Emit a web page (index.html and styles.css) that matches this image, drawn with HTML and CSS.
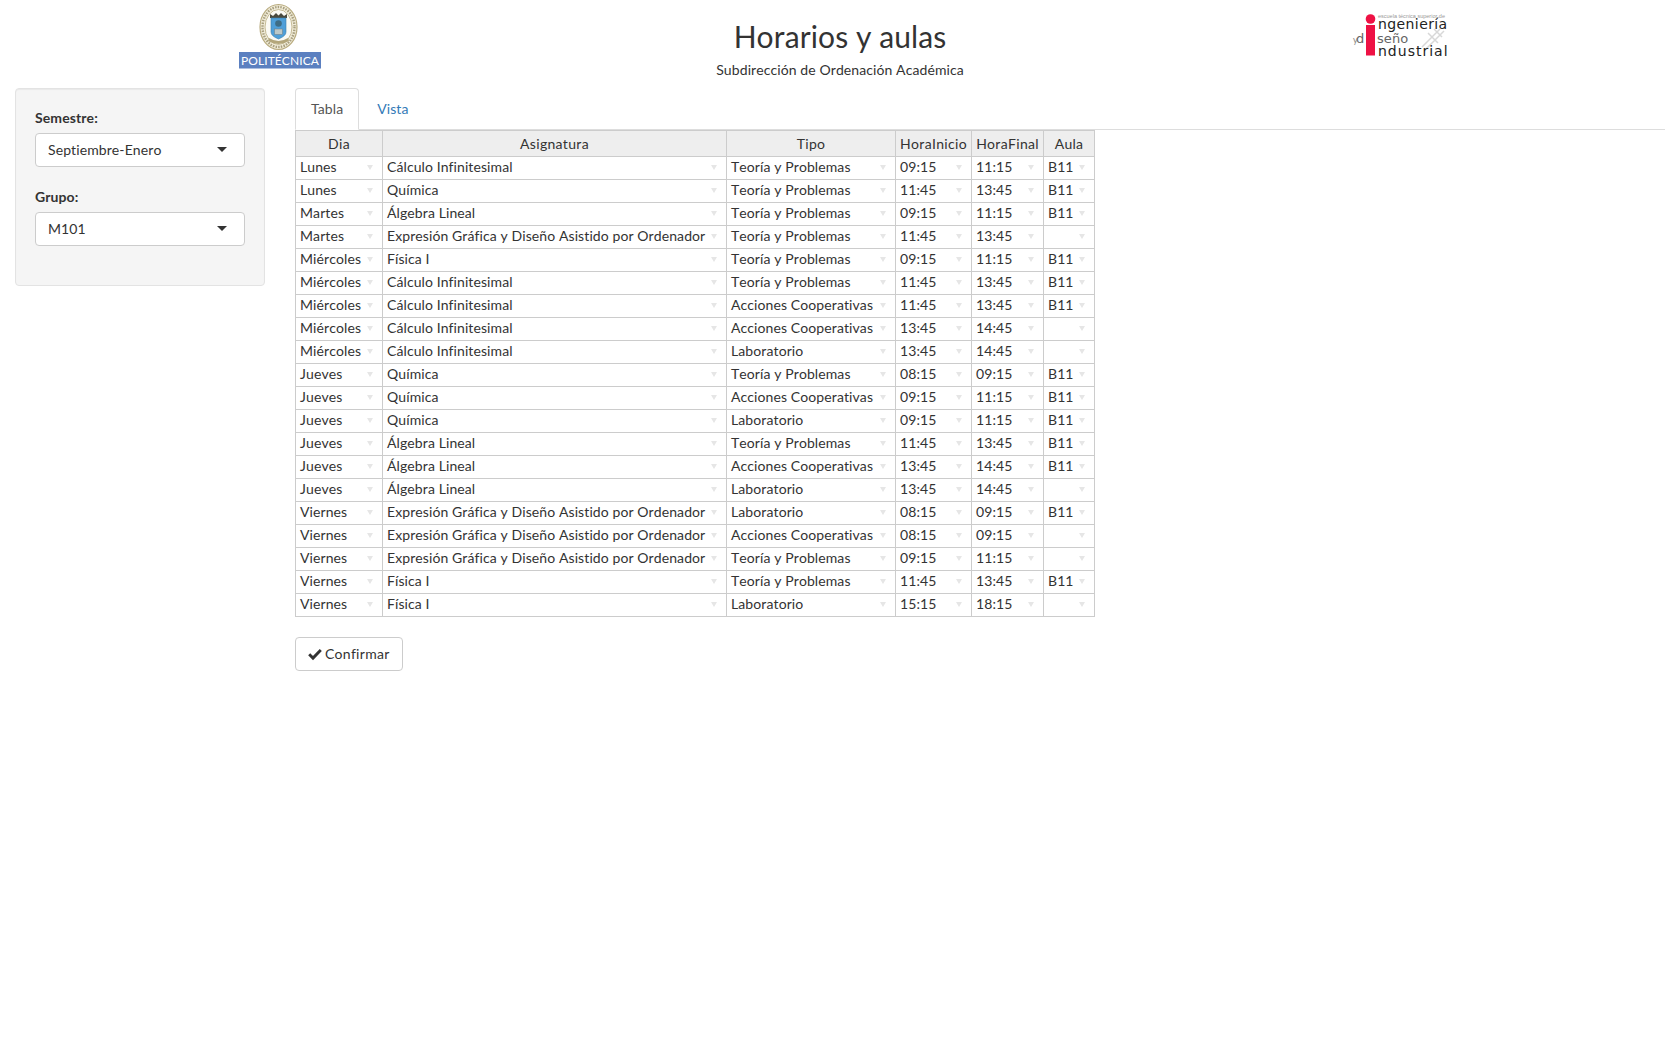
FILE: index.html
```html
<!DOCTYPE html>
<html>

<head>
	<title>Horarios y aulas</title>
	<meta charset="UTF-8">
	<link rel="stylesheet" href="styles.css">
	<meta name="viewport" content="width=device-width, initial-scale=1">
</head>

<body>
	<div class="header">
		<div class="header-col">
			<svg class="logo-upm" width="84" height="70" viewBox="0 0 84 70">
				<ellipse cx="39.500" cy="27" rx="18.500" ry="22.500" fill="#f1ecd9" stroke="#b9ac80" stroke-width="1.200"/>
				<ellipse cx="39.500" cy="27" rx="16" ry="20" fill="none" stroke="#8f8560" stroke-width="2.400" stroke-dasharray="1.500 1.200" opacity=".75"/>
				<ellipse cx="39.500" cy="27" rx="13.500" ry="17.500" fill="#fbfaf4" stroke="#b9ac80" stroke-width=".8"/>
				<path d="M31 14l3 2 3-3 2.500 2.500 2.500-2.500 3 3 3-2v4h-17z" fill="#4a4a3e"/>
				<path d="M32 18h15v14q0 4-7.500 7q-7.500-3-7.500-7z" fill="#4f9fd8" stroke="#3a7fae" stroke-width=".6"/>
				<circle cx="39.500" cy="23.500" r="3.300" fill="#3f6d85"/>
				<rect x="35.500" y="29" width="8" height="5.500" fill="#bcc8c8" stroke="#6d7d80" stroke-width=".5"/>
				<path d="M30 38q9.500 6 19 0l1 3q-10.500 6-21 0z" fill="#b3a67a"/>
				<rect x="0" y="52" width="82" height="16.500" fill="#5b80c0"/>
				<text x="41" y="64.500" class="logo-upm-text" text-anchor="middle">POLITÉCNICA</text>
			</svg>
		</div>
		<div class="header-col">
			<h2 class="title">Horarios y aulas</h2>
			<p class="subtitle">Subdirección de Ordenación Académica</p>
		</div>
		<div class="header-col">
			<svg class="logo-etsidi" width="100" height="50" viewBox="0 0 100 50">
				<path d="M72 37l18-18M76 39l18-18M78 23l10 10M84 19l8 8" stroke="#d8d8d8" stroke-width="1.500" fill="none"/>
				<circle cx="20.500" cy="9" r="4.800" fill="#ee1144"/>
				<rect x="16" y="15" width="9" height="30.500" fill="#ee1144"/>
				<text x="28" y="8" class="logo-small">escuela técnica superior de</text>
				<text x="28" y="19" class="logo-big">ngeniería</text>
				<text x="3" y="33" class="logo-gray-y">y</text>
				<text x="6" y="33" class="logo-gray">d</text>
				<text x="27" y="33" class="logo-gray">seño</text>
				<text x="28" y="46" class="logo-big logo-wide">ndustrial</text>
			</svg>
		</div>
	</div>

	<div class="content">
		<div class="sidebar">
			<div class="form-group">
				<label>Semestre:</label>
				<div class="select-box">Septiembre-Enero</div>
			</div>
			<div class="form-group">
				<label>Grupo:</label>
				<div class="select-box">M101</div>
			</div>
		</div>

		<div class="main">
			<ul class="nav-tabs">
				<li class="active">Tabla</li>
				<li>Vista</li>
			</ul>

			<table class="schedule">
				<colgroup>
					<col class="c-dia">
					<col class="c-asig">
					<col class="c-tipo">
					<col class="c-ini">
					<col class="c-fin">
					<col class="c-aula">
				</colgroup>
				<thead>
					<tr><th>Dia</th><th>Asignatura</th><th>Tipo</th><th>HoraInicio</th><th>HoraFinal</th><th>Aula</th></tr>
				</thead>
				<tbody>
					<tr><td>Lunes</td><td>Cálculo Infinitesimal</td><td>Teoría y Problemas</td><td>09:15</td><td>11:15</td><td>B11</td></tr>
					<tr><td>Lunes</td><td>Química</td><td>Teoría y Problemas</td><td>11:45</td><td>13:45</td><td>B11</td></tr>
					<tr><td>Martes</td><td>Álgebra Lineal</td><td>Teoría y Problemas</td><td>09:15</td><td>11:15</td><td>B11</td></tr>
					<tr><td>Martes</td><td>Expresión Gráfica y Diseño Asistido por Ordenador</td><td>Teoría y Problemas</td><td>11:45</td><td>13:45</td><td></td></tr>
					<tr><td>Miércoles</td><td>Física I</td><td>Teoría y Problemas</td><td>09:15</td><td>11:15</td><td>B11</td></tr>
					<tr><td>Miércoles</td><td>Cálculo Infinitesimal</td><td>Teoría y Problemas</td><td>11:45</td><td>13:45</td><td>B11</td></tr>
					<tr><td>Miércoles</td><td>Cálculo Infinitesimal</td><td>Acciones Cooperativas</td><td>11:45</td><td>13:45</td><td>B11</td></tr>
					<tr><td>Miércoles</td><td>Cálculo Infinitesimal</td><td>Acciones Cooperativas</td><td>13:45</td><td>14:45</td><td></td></tr>
					<tr><td>Miércoles</td><td>Cálculo Infinitesimal</td><td>Laboratorio</td><td>13:45</td><td>14:45</td><td></td></tr>
					<tr><td>Jueves</td><td>Química</td><td>Teoría y Problemas</td><td>08:15</td><td>09:15</td><td>B11</td></tr>
					<tr><td>Jueves</td><td>Química</td><td>Acciones Cooperativas</td><td>09:15</td><td>11:15</td><td>B11</td></tr>
					<tr><td>Jueves</td><td>Química</td><td>Laboratorio</td><td>09:15</td><td>11:15</td><td>B11</td></tr>
					<tr><td>Jueves</td><td>Álgebra Lineal</td><td>Teoría y Problemas</td><td>11:45</td><td>13:45</td><td>B11</td></tr>
					<tr><td>Jueves</td><td>Álgebra Lineal</td><td>Acciones Cooperativas</td><td>13:45</td><td>14:45</td><td>B11</td></tr>
					<tr><td>Jueves</td><td>Álgebra Lineal</td><td>Laboratorio</td><td>13:45</td><td>14:45</td><td></td></tr>
					<tr><td>Viernes</td><td>Expresión Gráfica y Diseño Asistido por Ordenador</td><td>Laboratorio</td><td>08:15</td><td>09:15</td><td>B11</td></tr>
					<tr><td>Viernes</td><td>Expresión Gráfica y Diseño Asistido por Ordenador</td><td>Acciones Cooperativas</td><td>08:15</td><td>09:15</td><td></td></tr>
					<tr><td>Viernes</td><td>Expresión Gráfica y Diseño Asistido por Ordenador</td><td>Teoría y Problemas</td><td>09:15</td><td>11:15</td><td></td></tr>
					<tr><td>Viernes</td><td>Física I</td><td>Teoría y Problemas</td><td>11:45</td><td>13:45</td><td>B11</td></tr>
					<tr><td>Viernes</td><td>Física I</td><td>Laboratorio</td><td>15:15</td><td>18:15</td><td></td></tr>
				</tbody>
			</table>

			<button class="btn">
				<svg class="check" width="14" height="14" viewBox="0 0 14 14"><path d="M1.200 7.300l3.800 3.800 7.800-8" fill="none" stroke="#333" stroke-width="2.900"/></svg>
				Confirmar
			</button>
		</div>
	</div>
</body>

</html>
```

FILE: styles.css
```css
body {
	margin: 0;
	font-family: Lato, "Liberation Sans", sans-serif;
	font-size: 14px;
	line-height: 20px;
	font-kerning: none;
	font-variant-ligatures: none;
	letter-spacing: .09px;
	color: #333;
	background-color: #fff;
}

/* header */
.header {
	display: grid;
	grid-template-columns: repeat(3, 1fr);
	height: 88px;
}

.header-col {
	display: flex;
	flex-direction: column;
	align-items: center;
}

.logo-upm {
	display: block;
	margin-left: 1px;
}

.logo-upm-text {
	font-size: 12px;
	fill: #fff;
}

.logo-etsidi {
	display: block;
	margin-top: 10px;
}

.logo-small {
	font-size: 5.500px;
	fill: #999;
	letter-spacing: 0;
	font-family: "Liberation Sans", sans-serif;
}

.logo-big {
	font-size: 14px;
	fill: #222;
	letter-spacing: .4px;
	font-family: "DejaVu Sans", sans-serif;
}

.logo-wide {
	letter-spacing: 1px;
}

.logo-gray {
	font-size: 13px;
	fill: #666;
	font-family: "DejaVu Sans", sans-serif;
}

.logo-gray-y {
	font-size: 9px;
	fill: #888;
}

.title {
	font-size: 30px;
	font-weight: 400;
	line-height: 36px;
	margin: 18px 0 0;
}

.subtitle {
	margin: 6px 0 0;
}

/* layout */
.content {
	display: flex;
	align-items: flex-start;
	padding: 0 15px;
}

.sidebar {
	box-sizing: border-box;
	width: 250px;
	height: 198px;
	margin-right: 30px;
	padding: 19px;
	background-color: #f5f5f5;
	border: 1px solid #e3e3e3;
	border-radius: 4px;
	box-shadow: inset 0 1px 1px rgba(0, 0, 0, .05);
}

.form-group {
	margin-bottom: 20px;
}

.form-group label {
	display: block;
	font-weight: 700;
	margin-bottom: 5px;
}

.select-box {
	position: relative;
	box-sizing: border-box;
	height: 34px;
	padding: 6px 12px;
	background-color: #fff;
	border: 1px solid #ccc;
	border-radius: 4px;
}

.select-box::after {
	content: "";
	position: absolute;
	top: 13px;
	right: 17px;
	border-top: 5px solid #333;
	border-left: 5px solid transparent;
	border-right: 5px solid transparent;
}

.main {
	flex: 1;
}

/* tabs */
.nav-tabs {
	display: flex;
	list-style: none;
	margin: 0;
	padding: 0;
	height: 42px;
	box-sizing: border-box;
	font-kerning: normal;
	border-bottom: 1px solid #ddd;
}

.nav-tabs li {
	height: 42px;
	box-sizing: border-box;
	padding: 10px 15px;
	margin-right: 2px;
	color: #337ab7;
	border: 1px solid transparent;
	border-radius: 4px 4px 0 0;
}

.nav-tabs li.active {
	color: #555;
	background-color: #fff;
	border-color: #ddd #ddd #fff;
}

/* table */
.schedule {
	table-layout: fixed;
	width: 799px;
	border-collapse: collapse;
	border: 1px solid #ccc;
}

.c-dia { width: 87px; }
.c-asig { width: 344px; }
.c-tipo { width: 169px; }
.c-ini { width: 76px; }
.c-fin { width: 72px; }
.c-aula { width: 51px; }

.schedule th,
.schedule td {
	height: 23px;
	box-sizing: border-box;
	padding: 0 4px 2px;
	border: 1px solid #ccc;
	white-space: nowrap;
	overflow: hidden;
}

.schedule th {
	height: 26px;
	padding-bottom: 0;
	font-weight: 400;
	letter-spacing: .3px;
	text-align: center;
	background-color: #eee;
}

.schedule td {
	position: relative;
}

.schedule td::after {
	content: "";
	position: absolute;
	top: 8px;
	right: 9px;
	border-top: 5px solid #e6e6e6;
	border-left: 3px solid transparent;
	border-right: 3px solid transparent;
}

/* button */
.btn {
	display: block;
	height: 34px;
	margin-top: 20px;
	padding: 6px 12px;
	font: inherit;
	font-kerning: none;
	font-variant-ligatures: none;
	letter-spacing: .3px;
	color: #333;
	background-color: #fff;
	border: 1px solid #ccc;
	border-radius: 4px;
}

.check {
	vertical-align: -2px;
	margin-right: -1px;
}
```
